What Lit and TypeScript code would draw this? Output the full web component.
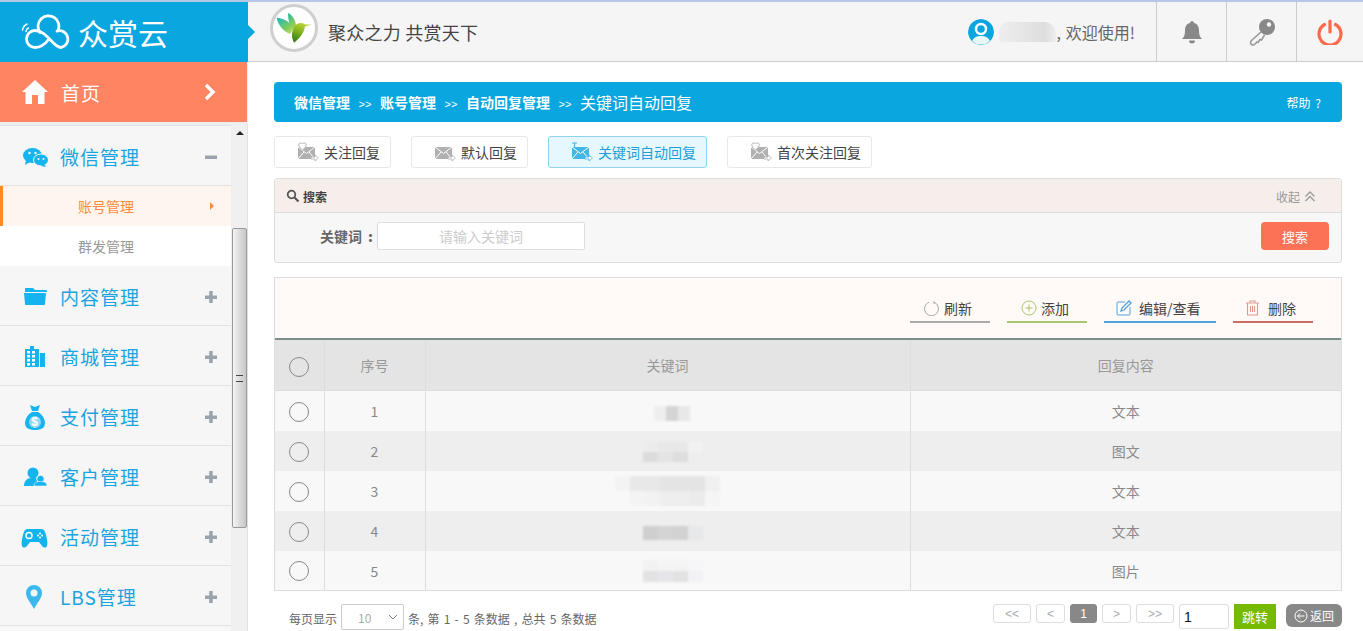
import { LitElement, html, css, svg } from 'lit';
import { customElement } from 'lit/decorators.js';

const BLUE = '#15b4ee';

const menuIcons: Record<string, unknown> = {
  wechat: svg`<g transform="translate(1 4)"><ellipse cx="9.500" cy="7.500" rx="9.500" ry="7.500" fill="${BLUE}"/><path d="M3 12l-1 5 5-3z" fill="${BLUE}"/>
    <ellipse cx="18" cy="12" rx="7.500" ry="6" fill="${BLUE}" stroke="#f6f6f6" stroke-width="1"/><path d="M21 16l2 3-5-1z" fill="${BLUE}"/>
    <circle cx="6.500" cy="5" r="1.200" fill="#fff"/><circle cx="12.500" cy="5" r="1.200" fill="#fff"/><circle cx="15.500" cy="11" r="1" fill="#fff"/><circle cx="20.500" cy="11" r="1" fill="#fff"/></g>`,
  folder: svg`<g transform="translate(2 2)"><path d="M1 2h8l2 2h11a1 1 0 0 1 1 1v1H1z" fill="${BLUE}"/><path d="M0 7h22l-1 11a1 1 0 0 1-1 1H2a1 1 0 0 1-1-1z" fill="${BLUE}"/></g>`,
  city: svg`<path d="M3 23V5h5V2h4v3h5v18z" fill="${BLUE}"/><path d="M18 9h5v14h-5z" fill="${BLUE}"/>
    <path d="M5 7h3v2.500H5zM10 7h3v2.500h-3zM5 11h3v2.500H5zM10 11h3v2.500h-3zM5 15h3v2.500H5zM10 15h3v2.500h-3zM5 19h3v2.500H5zM10 19h3v2.500h-3z" fill="#fff"/>`,
  money: svg`<path d="M8 1l5 2 5-2-2 6h-6z" fill="${BLUE}"/><path d="M10 8h6c5 3 7 8 7 11 0 5-4 7-10 7S3 24 3 19c0-3 2-8 7-11z" fill="${BLUE}"/>
    <circle cx="13" cy="18" r="6" fill="#8fd9f5"/><text x="13" y="22" font-size="12" font-weight="700" text-anchor="middle" fill="#fff" font-family="Liberation Sans">$</text>`,
  users: svg`<circle cx="11" cy="9" r="5.500" fill="${BLUE}"/><path d="M2 22c0-5 3-8 7-8h5c2 0 2 8 0 8z" fill="${BLUE}"/>
    <circle cx="18.500" cy="15" r="3.800" fill="${BLUE}" stroke="#f6f6f6" stroke-width="1"/><path d="M12 22c0-3 2-4.500 6.500-4.500S25 19 25 22z" fill="${BLUE}" stroke="#f6f6f6" stroke-width="0.600"/>`,
  game: svg`<g transform="translate(-1 3)"><path d="M7 2h13c3 0 4 2 5 6s2 8 1 11c-1 2-3 2-5 0l-3-4H9l-3 4c-2 2-4 2-5 0-1-3 0-7 1-11s2-6 5-6z" fill="${BLUE}"/>
    <circle cx="8" cy="8.500" r="3" fill="none" stroke="#fff" stroke-width="1.500"/><circle cx="17" cy="8.500" r="1" fill="#fff"/><circle cx="21" cy="8.500" r="1" fill="#fff"/><circle cx="19" cy="6.500" r="1" fill="#fff"/><circle cx="19" cy="10.500" r="1" fill="#fff"/></g>`,
  pin: svg`<g transform="translate(1 1)"><path d="M11 0a8 8 0 0 1 8 8c0 5-5 10-8 16-3-6-8-11-8-16a8 8 0 0 1 8-8z" fill="#3bb8ee"/><circle cx="11" cy="8" r="3.500" fill="#f6f6f6"/></g>`,
};

const mailIcon = (color: string, mark: 'heart' | 'none' | 'text') => html`
  <svg class="mail" width="22" height="20" viewBox="0 0 22 20">
    <rect x="1" y="5" width="17" height="12" fill="${color}"/>
    <path d="M1 5l8.500 6.500L18 5M1 17l6-7M18 17l-6-7" stroke="#fff" stroke-width="1" fill="none"/>
    <path d="M14 15h4v-2l3.500 3-3.500 3v-2h-4z" fill="#fff" stroke="${color}" stroke-width="0.800"/>
    ${mark === 'heart' ? svg`<path d="M5.500 8C1 5 1 1 3.500 1 5 1 5.500 2 5.500 2S6 1 7.500 1C10 1 10 5 5.500 8z" fill="#fff" stroke="${color}" stroke-width="1"/>` : ''}
    ${mark === 'text' ? svg`<path d="M1 1h5M3.500 1v5" stroke="${color}" stroke-width="1.200"/>` : ''}
  </svg>`;

const menus = [
  { name: '微信管理', icon: 'wechat', open: true },
  { name: '内容管理', icon: 'folder' },
  { name: '商城管理', icon: 'city' },
  { name: '支付管理', icon: 'money' },
  { name: '客户管理', icon: 'users' },
  { name: '活动管理', icon: 'game' },
  { name: 'LBS管理', icon: 'pin' },
];

const tabs = [
  { name: '关注回复', mark: 'heart' as const },
  { name: '默认回复', mark: 'none' as const },
  { name: '关键词自动回复', mark: 'text' as const, on: true },
  { name: '首次关注回复', mark: 'heart' as const },
];

// the keyword column is pixelated in the reference, each row is a small mosaic
const rows = [
  { type: '文本', x: 8, w: 12, h: 15, blur: [['#eeeeee', '#d4d4d4', '#e8e8e8']] },
  { type: '图文', x: 10, w: 15, h: 10, blur: [['#ececec', '#e8e8e8', '#e8e8e8', '#f1f1f1'], ['#dcdcdc', '#e4e4e4', '#dedede', '#eeeeee']] },
  { type: '文本', x: 0, w: 15, h: 15, blur: [['#f3f3f3', '#e8e8e8', '#e8e8e8', '#e4e4e4', '#e4e4e4', '#e4e4e4', '#f0f0f0'], ['#f8f8f8', '#f4f4f4', '#f2f2f2', '#eeeeee', '#eeeeee', '#ebebeb', '#f5f5f5']] },
  { type: '文本', x: 10, w: 15, h: 14, blur: [['#cfcfcf', '#d4d4d4', '#d2d2d2', '#e6e8ea']] },
  { type: '图片', x: 10, w: 15, h: 11, blur: [['#f2f2f2', '#f4f4f4', '#f3f3f3', '#f6f6f8'], ['#e2e2e2', '#e6e6ea', '#e2e2e2', '#f2f2f6']] },
];

@customElement('app-root')
export class AppRoot extends LitElement {
  static override styles = css`
    :host {
      display: block;
      height: 100vh;
      overflow: hidden;
      background: #fff;
      font-family: "Noto Sans CJK SC", "Liberation Sans", sans-serif;
      color: #444;
    }
    svg { display: block; flex: none; }

    .top {
      display: flex;
      height: 62px;
      box-sizing: border-box;
      border-top: 2px solid #b5c8e4;
      border-bottom: 1px solid #ccc;
      background: #f5f5f5;
    }
    .brand {
      position: relative;
      width: 248px;
      height: 60px;
      display: flex;
      align-items: center;
      gap: 7px;
      padding-left: 21px;
      box-sizing: border-box;
      background: #09a6e0;
      color: #fff;
      font-size: 30px;
    }
    .brand::after {
      content: '';
      position: absolute;
      left: 100%;
      top: 23px;
      border: 7px solid transparent;
      border-left-color: #09a6e0;
      border-right-width: 0;
    }
    .slogan {
      display: flex;
      align-items: center;
      gap: 10px;
      padding-left: 22px;
      font-size: 18px;
      letter-spacing: 0.25px;
      flex: 1;
    }
    .bird {
      width: 48px;
      height: 48px;
      margin-top: -7px;
      box-sizing: border-box;
      border: 3px solid #cfcfcf;
      border-radius: 50%;
      background: #fff;
    }
    .user {
      display: flex;
      align-items: center;
      font-size: 16px;
      color: #666;
      padding-right: 21px;
    }
    .avatar {
      width: 26px;
      height: 26px;
      margin-right: 5px;
      border-radius: 50%;
    }
    .uname {
      width: 57px;
      height: 20px;
      border-radius: 9px 12px 2px 2px;
      background: linear-gradient(90deg, #eee, #e6e6e6 40%, #ddd 80%, #eee);
    }
    .comma { margin-right: 5px; }
    .cell {
      width: 70px;
      border-left: 1px solid #ccc;
      box-sizing: border-box;
      display: flex;
      align-items: center;
      justify-content: center;
    }
    .cell.last { width: 67px; }

    .below { display: flex; height: 569px; }

    .side {
      width: 248px;
      flex: none;
      display: flex;
      flex-direction: column;
      background: #eee;
    }
    .home {
      height: 60px;
      flex: none;
      display: flex;
      align-items: center;
      padding: 0 30px 0 22px;
      background: #ff8562;
      color: #fff;
      font-size: 19px;
      letter-spacing: 1px;
      margin-right: 1px;
    }
    .home span { margin-left: 13px; flex: 1; }
    .side-body { flex: 1; display: flex; min-height: 0; margin-top: 3px; }
    .menu { width: 231px; flex: none; background: #f6f6f6; border-top: 1px solid #e2e2e2; }
    .group {
      height: 59px;
      border-bottom: 1px solid #e2e2e2;
      display: flex;
      align-items: center;
      color: #1ba3e0;
      font-size: 19px;
      letter-spacing: 1px;
    }
    .group .ico { width: 60px; padding-left: 22px; flex: none; box-sizing: border-box; }
    .group .ico svg { overflow: visible; }
    .group .label { flex: 1; padding-top: 2px; }
    .plus { width: 14px; height: 14px; margin: 2px 13px 0 0; flex: none; }
    .sub {
      height: 40px;
      display: flex;
      align-items: center;
      padding-left: 78px;
      font-size: 14px;
      color: #999;
      background: #fff;
    }
    .sub.on {
      position: relative;
      background: #fff5ef;
      color: #ff8a3c;
    }
    .sub.on::before {
      content: '';
      position: absolute;
      left: 0;
      top: 0;
      bottom: 0;
      width: 3px;
      background: #ff8a2b;
    }
    .sub.on::after {
      content: '';
      position: absolute;
      left: 210px;
      top: 16px;
      border: 4px solid transparent;
      border-left-color: #ff8a3c;
      border-right-width: 0;
    }
    .bar {
      flex: none;
      background: #f0f0f0;
      border-right: 1px solid #e2e2e2;
      width: 15px;
      margin-left: 1px;
    }
    .bar i {
      display: block;
      margin: 6px auto 0;
      width: 0;
      border: 4px solid transparent;
      border-top-width: 0;
      border-bottom: 4px solid #222;
    }
    .thumb {
      margin-top: 93px;
      height: 300px;
      box-sizing: border-box;
      border: 1px solid #999;
      border-radius: 2px;
      background: linear-gradient(90deg, #f4f4f4, #dcdcdc 50%, #c8c8c8);
      display: flex;
      align-items: center;
      justify-content: center;
    }
    .thumb b { width: 7px; height: 5px; border-top: 1px solid #444; border-bottom: 1px solid #444; }

    .main {
      flex: 1;
      min-width: 0;
      padding: 20px 21px 0 26px;
    }
    .crumb {
      height: 40px;
      border-radius: 4px;
      background: #09a6e0;
      color: #fff;
      display: flex;
      align-items: center;
      padding: 0 21px 0 20px;
      font-size: 14px;
      font-weight: 700;
    }
    .crumb em { font-style: normal; font-weight: 400; font-size: 11px; width: 30px; padding-top: 3px; text-align: center; font-family: "Liberation Sans", sans-serif; }
    .crumb .now { font-size: 16px; font-weight: 400; flex: 1; }
    .crumb .help { font-size: 12px; font-weight: 400; word-spacing: 2px; }

    .tabs { display: flex; gap: 20px; margin-top: 14px; }
    .tab {
      height: 32px;
      box-sizing: border-box;
      display: flex;
      align-items: center;
      padding: 0 10px 0 22px;
      border: 1px solid #e8e8e8;
      border-radius: 3px;
      font-size: 14px;
      color: #444;
    }
    .tab .mail { margin-right: 5px; }
    .tab.on { background: #e6f7fe; border-color: #8dd4f2; color: #1b9fd8; }

    .search {
      margin-top: 10px;
      height: 85px;
      box-sizing: border-box;
      border: 1px solid #ddd;
      border-radius: 3px;
      background: #f8f7f8;
    }
    .search-head {
      height: 34px;
      box-sizing: border-box;
      border-bottom: 1px solid #ddd;
      background: #f6eeeb;
      display: flex;
      align-items: center;
      padding: 0 25px 0 11px;
      font-size: 12px;
      font-weight: 700;
    }
    .search-head .t { flex: 1; margin-left: 3px; padding-top: 1px; }
    .fold { display: flex; align-items: center; gap: 4px; font-weight: 400; color: #999; padding-top: 1px; }
    .search-body {
      display: flex;
      align-items: center;
      padding: 9px 12px 0 45px;
      font-size: 14px;
      font-weight: 700;
      color: #666;
    }
    .search-body .kw { flex: none; width: 57px; display: flex; }
    .search-body .kw b { margin-left: 6px; }
    .fake-input {
      width: 208px;
      height: 28px;
      box-sizing: border-box;
      border: 1px solid #ddd;
      border-radius: 2px;
      background: #fff;
      color: #ccc;
      font-weight: 400;
      display: flex;
      align-items: center;
      justify-content: center;
      margin-right: auto;
    }
    .go {
      width: 68px;
      height: 28px;
      border-radius: 4px;
      background: #fb7256;
      color: #fff;
      font-size: 13px;
      font-weight: 400;
      display: flex;
      align-items: center;
      justify-content: center;
    }

    .grid {
      margin-top: 14px;
      border: 1px solid #ddd;
      background: #fff9f8;
    }
    .tools {
      height: 60px;
      display: flex;
      justify-content: flex-end;
      gap: 17px;
      padding: 0 28px 0 0;
      box-sizing: border-box;
    }
    .tool {
      margin-top: 20px;
      height: 25px;
      box-sizing: border-box;
      border-bottom: 2px solid;
      display: flex;
      align-items: center;
      gap: 4px;
      padding: 0 0 3px 14px;
      font-size: 14px;
      color: #444;
      width: 80px;
    }
    .tool.gray { border-color: #aaa; }
    .tool.green { border-color: #a7c86e; }
    .tool.blue { border-color: #4fa3dc; width: 112px; gap: 7px; padding-left: 12px; }
    .tool.red { border-color: #c96d66; gap: 8px; padding-left: 12px; }
    table {
      width: 100%;
      border-collapse: collapse;
      table-layout: fixed;
      border-top: 2px solid #7a8d88;
    }
    .c1 { width: 49px; }
    .c2 { width: 101px; }
    .c3 { width: 485px; }
    th, td {
      padding: 0;
      text-align: center;
      font-size: 14px;
      font-weight: 400;
      color: #888;
    }
    th { height: 50px; background: #e4e4e4; color: #999; border-bottom: 1px solid #ddd; }
    th .radio { margin-top: 3px; }
    td { height: 40px; background: #f9f8f8; }
    tr:last-child td { height: 39px; }
    td .radio { margin-top: 1px; }
    tr:nth-child(even) td { background: #eee; }
    th:nth-child(-n+3), td:nth-child(-n+3) { border-right: 1px solid #ddd; }
    .radio {
      display: block;
      margin: 0 auto;
      width: 20px;
      height: 20px;
      box-sizing: border-box;
      border: 1px solid #888;
      border-radius: 50%;
    }
    .mosaic { display: inline-flex; flex-direction: column; vertical-align: middle; filter: blur(0.8px); }
    .mosaic div { display: flex; }
    .mosaic span { display: block; height: 100%; }

    .pager {
      display: flex;
      align-items: flex-start;
      margin-top: 13px;
      font-size: 12px;
      color: #666;
      padding-left: 15px;
    }
    .per { margin-top: 6px; }
    .select {
      width: 63px;
      height: 26px;
      box-sizing: border-box;
      border: 1px solid #ccc;
      border-radius: 2px;
      margin: 0 4px;
      display: flex;
      align-items: center;
      justify-content: space-between;
      padding: 0 5px 0 16px;
      color: #aaa;
    }
    .info { margin-top: 6px; margin-right: auto; word-spacing: 1.500px; }
    .pg {
      width: 29px;
      height: 19px;
      box-sizing: border-box;
      border: 1px solid #ddd;
      border-radius: 3px;
      margin-right: 5px;
      display: flex;
      align-items: center;
      justify-content: center;
      color: #aaa;
      font-size: 12px;
      font-family: "Liberation Sans", sans-serif;
    }
    .pg.end { width: 38px; }
    .pg.cur { width: 27px; background: #888; border-color: #888; color: #fff; }
    .jump {
      width: 50px;
      height: 25px;
      box-sizing: border-box;
      border: 1px solid #ddd;
      border-radius: 3px;
      margin-right: 5px;
      padding-left: 4px;
      color: #111;
      font-size: 14px;
      line-height: 24px;
      font-family: "Liberation Sans", sans-serif;
    }
    .gojump {
      width: 42px;
      height: 25px;
      background: #75b900;
      color: #fff;
      font-size: 13px;
      display: flex;
      align-items: center;
      justify-content: center;
      margin-right: 10px;
    }
    .back {
      width: 56px;
      height: 23px;
      border-radius: 6px;
      background: #888;
      color: #fff;
      font-size: 12px;
      display: flex;
      align-items: center;
      justify-content: center;
      gap: 2px;
    }
  `;

  private renderTop() {
    return html`
      <div class="top">
        <div class="brand">
          <svg width="50" height="36" viewBox="0 0 50 36" fill="none" stroke="#fff" stroke-width="2.800" stroke-linecap="round">
            <path d="M19 18.500A10.500 10.500 0 1 1 37 16.800"/>
            <path d="M36 17A8.500 8.500 0 1 1 40 33.500C32 33.500 26 16.500 14 16.500A8.500 8.500 0 1 0 14 33.500C20 33.500 25 29 28 25"/>
            <path d="M1.500 16A8 8 0 0 1 6 10M5 17.500A4 4 0 0 1 7.500 14" stroke-width="1.400"/>
          </svg>
          <span>众赏云</span>
        </div>
        <div class="slogan">
          <div class="bird">
            <svg width="42" height="42" viewBox="0 0 42 42">
              <defs>
                <linearGradient id="wing" x1="0" y1="0" x2="1" y2="1"><stop offset="0" stop-color="#18b7c8"/><stop offset="0.600" stop-color="#7ccb5a"/><stop offset="1" stop-color="#d8e070"/></linearGradient>
                <linearGradient id="wing2" x1="0" y1="0" x2="0.600" y2="1"><stop offset="0" stop-color="#22b9a8"/><stop offset="1" stop-color="#a4d24a"/></linearGradient>
                <linearGradient id="body" x1="0.700" y1="0" x2="0.300" y2="1"><stop offset="0" stop-color="#c9d83a"/><stop offset="0.500" stop-color="#7fb31e"/><stop offset="1" stop-color="#2f7d10"/></linearGradient>
              </defs>
              <path d="M3.700 10.700C10 11 18 15 21 21L17 27C10 24 5 18 3.700 10.700z" fill="url(#wing)"/>
              <path d="M15.300 5.700C20 9 23 14 23 19L20 22C16 17 14.500 11 15.300 5.700z" fill="url(#wing2)"/>
              <path d="M24 17C27 15.500 30 16 32 17.500L39 17.500 32 19.500C31 26 27 31 21 35.700 19 31 18 27 20 23 21 20 22 18 24 17z" fill="url(#body)"/>
            </svg>
          </div>
          <span>聚众之力 共赏天下</span>
        </div>
        <div class="user">
          <svg class="avatar" viewBox="0 0 26 26">
            <circle cx="13" cy="13" r="13" fill="#0ba6e0"/>
            <circle cx="13" cy="10" r="5" fill="none" stroke="#fff" stroke-width="2.500"/>
            <path d="M4 22c2-4 5-5 9-5s7 1 9 5a13 13 0 0 1-18 0z" fill="#e8f6f6"/>
          </svg>
          <div class="uname"></div>
          <span class="comma">,</span>
          <span>欢迎使用!</span>
        </div>
        <div class="cell">
          <svg width="22" height="24" viewBox="0 0 22 24" fill="#888">
            <path d="M11 1c1 0 2 1 2 2 4 1 5 4 5 8 0 4 1 6 3 8H1c2-2 3-4 3-8 0-4 1-7 5-8 0-1 1-2 2-2z"/>
            <path d="M8 20.500h6a3 3 0 0 1-6 0z"/>
          </svg>
        </div>
        <div class="cell">
          <svg width="28" height="28" viewBox="0 0 28 28" fill="none">
            <circle cx="19" cy="9" r="8" fill="#888"/>
            <circle cx="21" cy="6.500" r="2.200" fill="#f5f5f5"/>
            <path d="M13 14L3 23a2.500 2.500 0 0 0 4 3l2-2 1 .5 2-3 1.500.5 3-5" stroke="#999" stroke-width="1.600"/>
          </svg>
        </div>
        <div class="cell last">
          <svg width="26" height="26" viewBox="0 0 26 26" fill="none" stroke="#fb6a4a" stroke-width="3.200" stroke-linecap="round">
            <path d="M7.500 5.500a11 11 0 1 0 11 0"/>
            <path d="M13 2v11"/>
          </svg>
        </div>
      </div>
    `;
  }

  private renderSide() {
    return html`
      <div class="side">
        <div class="home">
          <svg width="26" height="24" viewBox="0 0 26 24" fill="#fff">
            <path d="M13 0L0 12h3.500v12h6.500v-9h6v9h6.500V12H26z"/>
          </svg>
          <span>首页</span>
          <svg width="14" height="18" viewBox="0 0 14 18" fill="none" stroke="#fff" stroke-width="3.400"><path d="M3 2l7 7-7 7"/></svg>
        </div>
        <div class="side-body">
          <div class="menu">
            ${menus.map((m) => html`
              <div class="group">
                <div class="ico"><svg width="26" height="24" viewBox="0 0 26 24">${menuIcons[m.icon]}</svg></div>
                <span class="label">${m.name}</span>
                <svg class="plus" viewBox="0 0 14 14" fill="#9aa3ad">
                  <rect x="1" y="5.500" width="12" height="3.500"/>
                  ${m.open ? '' : svg`<rect x="5.200" y="1" width="3.500" height="12"/>`}
                </svg>
              </div>
              ${m.open ? html`
                <div class="sub on">账号管理</div>
                <div class="sub">群发管理</div>
              ` : ''}
            `)}
          </div>
          <div class="bar"><i></i><div class="thumb"><b></b></div></div>
        </div>
      </div>
    `;
  }

  private renderSearch() {
    return html`
      <div class="search">
        <div class="search-head">
          <svg width="14" height="14" viewBox="0 0 14 14" fill="none" stroke="#555" stroke-width="1.800">
            <circle cx="5.500" cy="5.500" r="3.800"/><path d="M8.500 8.500l4 4" stroke-width="2.200"/>
          </svg>
          <span class="t">搜索</span>
          <span class="fold">收起
            <svg width="12" height="11" viewBox="0 0 12 11" fill="none" stroke="#999" stroke-width="1.300"><path d="M1.500 5.500L6 1l4.500 4.500M1.500 10L6 5.500l4.500 4.500"/></svg>
          </span>
        </div>
        <div class="search-body">
          <span class="kw">关键词<b>:</b></span>
          <div class="fake-input">请输入关键词</div>
          <div class="go">搜索</div>
        </div>
      </div>
    `;
  }

  private renderGrid() {
    return html`
      <div class="grid">
        <div class="tools">
          <div class="tool gray">
            <svg width="16" height="16" viewBox="0 0 16 16" fill="none" stroke="#aaa"><path d="M5 2.200a7 7 0 1 0 5 0M10 1v3"/></svg>刷新
          </div>
          <div class="tool green">
            <svg width="16" height="16" viewBox="0 0 16 16" fill="none" stroke="#a7c86e"><circle cx="8" cy="8" r="7"/><path d="M8 4.500v7M4.500 8h7"/></svg>添加
          </div>
          <div class="tool blue">
            <svg width="16" height="16" viewBox="0 0 16 16" fill="none" stroke="#4fa3dc"><path d="M9 2H2a1 1 0 0 0-1 1v11a1 1 0 0 0 1 1h11a1 1 0 0 0 1-1V7"/><path d="M5 11l1-3 7-7 2 2-7 7z" stroke-width="1.300"/></svg>编辑/查看
          </div>
          <div class="tool red">
            <svg width="15" height="16" viewBox="0 0 15 16" fill="none" stroke="#e39a95"><path d="M1 3h13M5 3V1h5v2M2.500 3v12h10V3M5.500 6v6M7.500 6v6M9.500 6v6" stroke-width="1.100"/></svg>删除
          </div>
        </div>
        <table>
          <colgroup><col class="c1"/><col class="c2"/><col class="c3"/><col/></colgroup>
          <thead>
            <tr><th><span class="radio"></span></th><th>序号</th><th>关键词</th><th>回复内容</th></tr>
          </thead>
          <tbody>
            ${rows.map((r, i) => html`
              <tr>
                <td><span class="radio"></span></td>
                <td>${i + 1}</td>
                <td>
                  <span class="mosaic" style="margin-left:${r.x}px">
                    ${r.blur.map((line) => html`<div style="height:${r.h}px">${line.map((c) => html`<span style="width:${r.w}px;background:${c}"></span>`)}</div>`)}
                  </span>
                </td>
                <td>${r.type}</td>
              </tr>
            `)}
          </tbody>
        </table>
      </div>
    `;
  }

  private renderPager() {
    return html`
      <div class="pager">
        <span class="per">每页显示</span>
        <div class="select">10
          <svg width="10" height="6" viewBox="0 0 10 6" fill="none" stroke="#888"><path d="M1 1l4 4 4-4"/></svg>
        </div>
        <span class="info">条, 第 1 - 5 条数据 , 总共 5 条数据</span>
        <div class="pg end">&lt;&lt;</div>
        <div class="pg">&lt;</div>
        <div class="pg cur">1</div>
        <div class="pg">&gt;</div>
        <div class="pg end">&gt;&gt;</div>
        <div class="jump">1</div>
        <div class="gojump">跳转</div>
        <div class="back">
          <svg width="14" height="14" viewBox="0 0 14 14" fill="none" stroke="#fff"><circle cx="7" cy="7" r="6"/><path d="M10.500 7h-7M6 4.500L3.500 7 6 9.500"/></svg>返回
        </div>
      </div>
    `;
  }

  override render() {
    return html`
      ${this.renderTop()}
      <div class="below">
        ${this.renderSide()}
        <div class="main">
          <div class="crumb">
            <span>微信管理</span><em>&gt;&gt;</em><span>账号管理</span><em>&gt;&gt;</em><span>自动回复管理</span><em>&gt;&gt;</em>
            <span class="now">关键词自动回复</span>
            <span class="help">帮助 ?</span>
          </div>
          <div class="tabs">
            ${tabs.map((t) => html`
              <div class="tab ${t.on ? 'on' : ''}">
                ${mailIcon(t.on ? '#45b4e6' : '#b0b0b0', t.mark)}
                <span>${t.name}</span>
              </div>
            `)}
          </div>
          ${this.renderSearch()}
          ${this.renderGrid()}
          ${this.renderPager()}
        </div>
      </div>
    `;
  }
}
